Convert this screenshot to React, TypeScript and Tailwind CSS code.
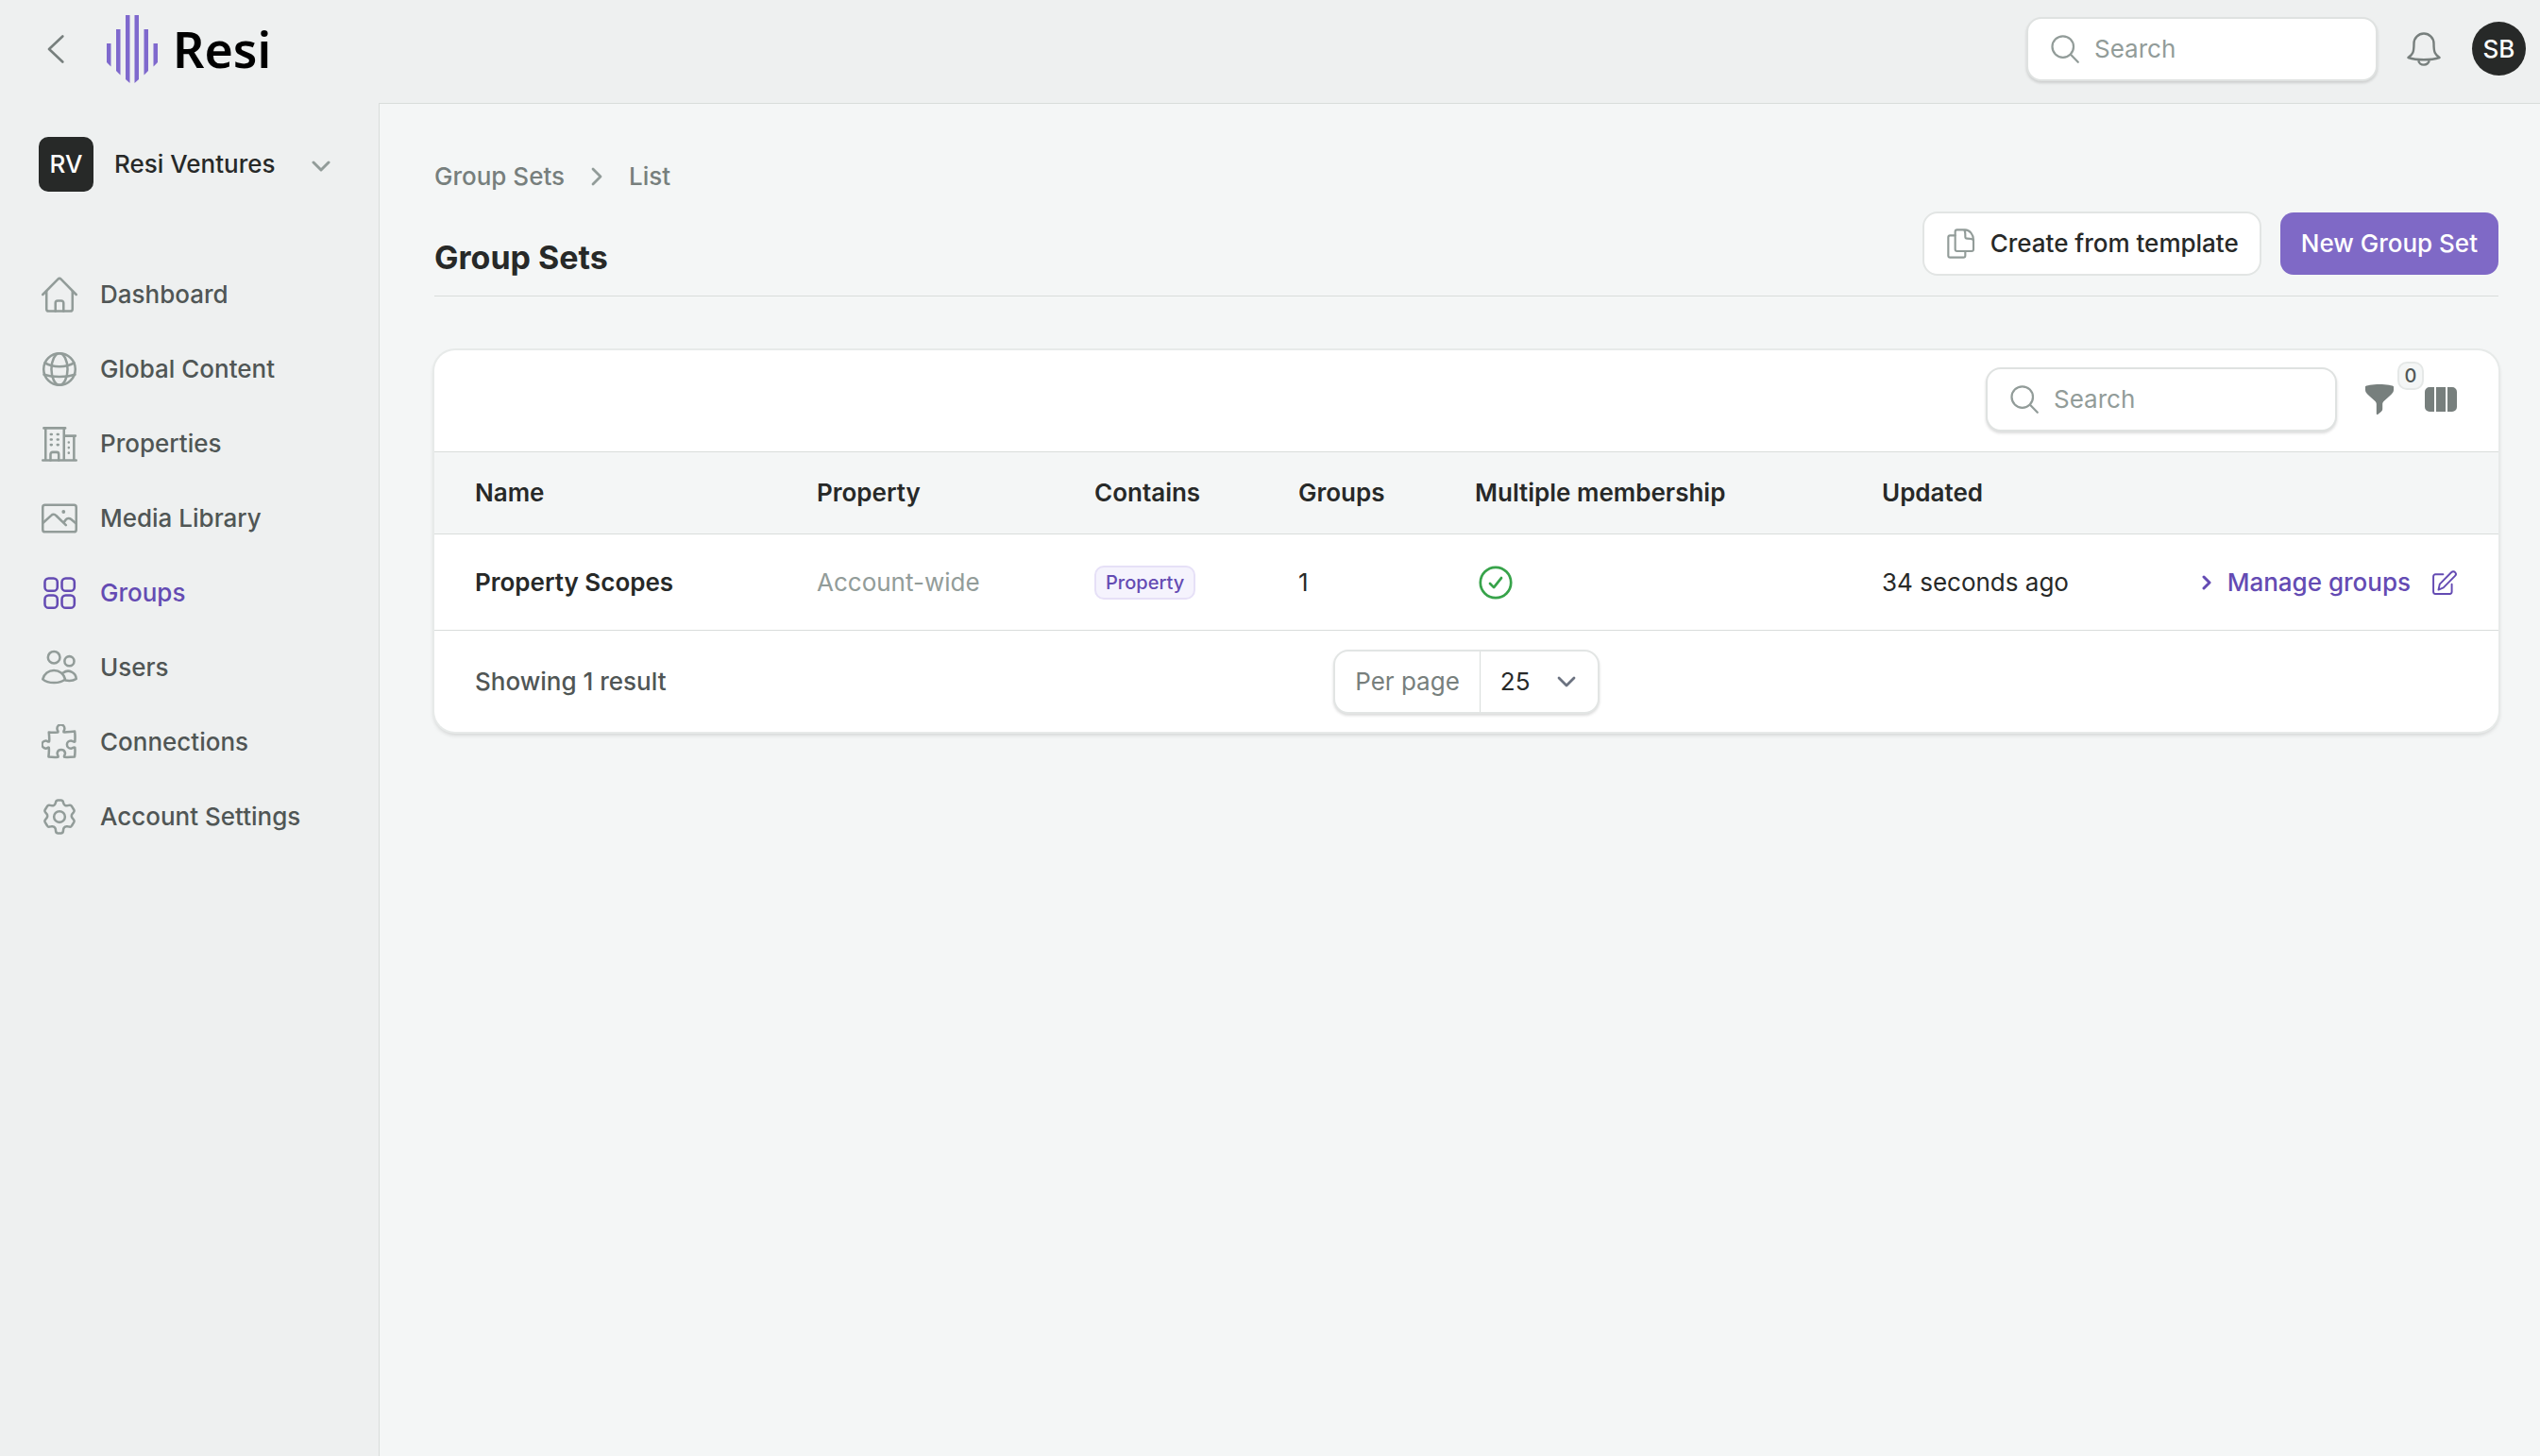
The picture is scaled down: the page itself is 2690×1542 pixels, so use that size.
import React from 'react';

type IconProps = { className?: string };

const Icon: React.FC<IconProps & { children: React.ReactNode; width?: number }> = ({ className, children, width = 1.6 }) => (
  <svg viewBox="0 0 24 24" fill="none" stroke="currentColor" strokeWidth={width} strokeLinecap="round" strokeLinejoin="round" className={className} aria-hidden="true">
    {children}
  </svg>
);

const SearchIcon = ({ className }: IconProps) => (
  <Icon className={className} width={1.8}>
    <circle cx="10.2" cy="10" r="9" />
    <path d="M16.8 16.6l6.2 6.4" />
  </Icon>
);

const navItems = [
  {
    label: 'Dashboard',
    icon: (
      <>
        <path d="M.8 12L11 1.6a1.4 1.4 0 0 1 2 0L23.2 12" />
        <path d="M3.3 9.600v12a1.5 1.5 0 0 0 1.5 1.5h14.4a1.5 1.5 0 0 0 1.5-1.500v-12" />
        <path d="M9.300 23v-5.400a1.500 1.500 0 0 1 1.500-1.500h2.400a1.500 1.500 0 0 1 1.500 1.500V23" />
      </>
    ),
  },
  {
    label: 'Global Content',
    icon: (
      <>
        <circle cx="12" cy="12" r="10.6" />
        <ellipse cx="12" cy="12" rx="5.4" ry="10.6" />
        <path d="M2.200 7.800c5.600 3.200 14 3.200 19.600 0M1.600 15.600c6 2 14.800 2 20.800 0" />
      </>
    ),
  },
  {
    label: 'Properties',
    icon: (
      <>
        <path d="M.8 23h22.400M1.500 1.500h14.400M2.700 1.500V23M15 1.500V23M15 6.700h7.700M21.700 6.700V23" />
        <path d="M6 23v-4a1.400 1.400 0 0 1 1.400-1.400h2.700A1.400 1.400 0 0 1 11.500 19v4" />
        <path d="M6.200 5.700h.6M10.600 5.700h.6M6.200 9.200h.6M10.600 9.200h.6M6.200 12.700h.6M10.600 12.700h.6M18.200 11v.1M18.200 14.500v.1M18.200 18v.1" />
      </>
    ),
  },
  {
    label: 'Media Library',
    icon: (
      <>
        <rect x=".8" y="3" width="22.4" height="18" rx="1.5" />
        <path d="M1 15l5.500-5a2.200 2.200 0 0 1 3.200.1l6.600 6.400M14.700 15l1.500-2.100a2.600 2.600 0 0 1 3.600-.3l3.200 2.700" />
        <path d="M14.700 7.500v.1" strokeWidth="2.4" />
      </>
    ),
  },
  {
    label: 'Groups',
    active: true,
    icon: (
      <>
        <rect x="2.2" y="2.2" width="8.4" height="8.4" rx="2.6" />
        <rect x="13.6" y="2.2" width="8.4" height="8.4" rx="2.6" />
        <rect x="2.2" y="13.6" width="8.4" height="8.4" rx="2.6" />
        <rect x="13.6" y="13.6" width="8.4" height="8.4" rx="2.6" />
      </>
    ),
  },
  {
    label: 'Users',
    icon: (
      <>
        <circle cx="8.3" cy="5.2" r="4" />
        <circle cx="18.6" cy="7.7" r="3.2" />
        <path d="M.8 19.800a7.700 7.700 0 0 1 15 0c-3.500 3.100-11.500 3.100-15 0zM14.500 15.500a5.400 5.400 0 0 1 8.700 4c-1.700 1.200-4.600 1.600-7.200 1.100" />
      </>
    ),
  },
  {
    label: 'Connections',
    icon: (
      <path
        d="M10.900 6.300c.5-.6-.5-1-.5-2.500a2.500 2.500 0 0 1 5 0c0 1.500-1 1.900-.5 2.500.9.300 5.100-.4 7.300-.5.300 2.300.3 4.600.1 6.900-.6.700-1.400-.7-2.700-.7a2.600 2.600 0 0 0 0 5.200c1.300 0 2-1.300 2.700-.6.200 2 .1 4.500-.2 6.200-2.200.2-4.500.4-6.800.2-.7-.6.500-1.200.5-2.700a2.700 2.700 0 0 0-5.300 0c0 1.500 1.100 2.100.5 2.700-2 .2-4.200.1-6.300-.2.100-2 .5-4.200.2-6.200-.6-.5-1 .6-2 .6a2.500 2.500 0 0 1 0-5.100c1 0 1.500 1 2.200.5.300-2 0-4-.2-6.200 2 .2 4 .2 6 0z"
        transform="translate(0 -1)"
      />
    ),
  },
  {
    label: 'Account Settings',
    icon: (
      <>
        <circle cx="12" cy="12" r="3.7" />
        <path d="M9.300 3l.3-1a1.400 1.400 0 0 1 1.400-1.100h2A1.400 1.400 0 0 1 14.400 2l.3 1a2.200 2.200 0 0 0 2.700 1.500l1.200-.2a1.400 1.400 0 0 1 1.600.7l1.500 2.400a1.400 1.400 0 0 1-.2 1.600l-.8.900a2.200 2.200 0 0 0 0 3.100l.8 1a1.400 1.400 0 0 1 .2 1.600L20.200 18a1.400 1.400 0 0 1-1.600.7l-1.200-.2a2.200 2.200 0 0 0-2.700 1.500l-.3 2a1.400 1.400 0 0 1-1.400 1.100h-2A1.400 1.400 0 0 1 9.600 22l-.3-2a2.200 2.200 0 0 0-2.700-1.500l-1.200.2A1.400 1.400 0 0 1 3.800 18l-1.500-2.400a1.400 1.400 0 0 1 .2-1.600l.8-1a2.200 2.200 0 0 0 0-3.100l-.8-.9a1.400 1.400 0 0 1-.2-1.600L3.800 5a1.400 1.400 0 0 1 1.600-.7l1.200.2A2.200 2.200 0 0 0 9.300 3z" />
      </>
    ),
  },
];

const SearchBox: React.FC<{ label: string }> = ({ label }) => (
  <label className="flex h-[68px] w-[372px] items-center gap-4 rounded-[16px] border-2 border-[#dfe2e1] bg-white pl-6 pr-4 shadow-[0_2px_3px_rgba(0,0,0,0.14)]">
    <SearchIcon className="h-[30px] w-[30px] shrink-0 text-[#929c99]" />
    <input type="search" aria-label={label} placeholder="Search" className="w-full min-w-0 bg-transparent outline-none placeholder:text-[#929c99]" />
  </label>
);

const Header = () => (
  <header className="flex h-[109px] items-center justify-between pl-[50px] pr-[15px] pb-[6px]">
    <div className="flex items-center">
      <button type="button" aria-label="Back" className="text-[#777f7d]">
        <svg viewBox="0 0 18 30" className="h-[30px] w-[18px]" fill="none" stroke="currentColor" strokeWidth="2.6" strokeLinecap="round" strokeLinejoin="round">
          <path d="M16.300 1.500L2 15l14.300 13.500" />
        </svg>
      </button>
      <a href="#home" aria-label="Resi" className="ml-[45px] flex items-center gap-4 text-black">
        <svg viewBox="0 0 54 72" className="h-[72px] w-[54px]" fill="#7f69cd" aria-hidden="true">
          <path d="M0 30h4.500v24.500L0 50zM10 15h4.500v48.500L10 59zM20 0h4.500v72L20 68zM29.500 0H34v68l-4.500 4zM39.500 15H44v44l-4.500 4.500zM49.500 30H54v20l-4.500 4.500z" />
        </svg>
        <span className="font-['Noto_Sans',sans-serif] text-[52px] leading-[72px] font-semibold">Resi</span>
      </a>
    </div>
    <div className="flex items-center">
      <SearchBox label="Search everything" />
      <button type="button" aria-label="Notifications" className="ml-[31px] text-[#777f7d]">
        <Icon className="h-9 w-9">
          <path d="M12 1a7 7 0 0 1 7 7c0 7 1 7.500 4 10-6 2-16 2-22 0 3-2.500 4-3 4-10a7 7 0 0 1 7-7zM8.200 19.600c0 4.600 7.600 4.600 7.600 0" />
        </Icon>
      </button>
      <button type="button" aria-label="Account menu" className="ml-[33px] h-[57px] w-[57px] rounded-full bg-[#272928] font-medium text-white">SB</button>
    </div>
  </header>
);

const Sidebar = () => (
  <aside className="w-[401px] shrink-0">
    <button type="button" className="mt-9 ml-[41px] flex items-center">
      <span className="flex h-[58px] w-[58px] items-center justify-center rounded-[10px] bg-[#272928] font-medium text-white">RV</span>
      <span className="ml-[22px] w-[209px] text-left font-medium">Resi Ventures</span>
      <svg viewBox="0 0 20 12" className="mt-1 h-3 w-5" fill="none" stroke="#929c99" strokeWidth="3" strokeLinecap="round" strokeLinejoin="round" aria-hidden="true">
        <path d="M2 2l8 8 8-8" />
      </svg>
    </button>
    <nav className="mt-[69px]">
      <ul>
        {navItems.map((item) => (
          <li key={item.label}>
            <a href="#" className={`flex h-[79px] items-center gap-6 pl-11 font-medium ${item.active ? 'text-[#644bb3]' : 'text-[#505655]'}`}>
              <Icon className={`h-[38px] w-[38px] ${item.active ? '' : 'text-[#929c99]'}`}>{item.icon}</Icon>
              {item.label}
            </a>
          </li>
        ))}
      </ul>
    </nav>
  </aside>
);

const PageHeading = () => (
  <div>
    <nav aria-label="Breadcrumb" className="flex items-center font-medium text-[#777f7d]">
      <a href="#group-sets">Group Sets</a>
      <svg viewBox="0 0 12 20" className="mx-7 h-5 w-3" fill="none" stroke="#929c99" strokeWidth="2.8" strokeLinecap="round" strokeLinejoin="round" aria-hidden="true">
        <path d="M2 2l8 8-8 8" />
      </svg>
      <span>List</span>
    </nav>
    <div className="mt-[19px] flex items-end justify-between border-b border-[#d9dddb] pb-[21px]">
      <h1 className="-mb-1 text-[34px] leading-[46px] font-bold">Group Sets</h1>
      <div className="flex items-center gap-5">
        <button type="button" className="flex h-[68px] items-center gap-4 rounded-[16px] border-2 border-[#e2e5e4] bg-white px-[22px] font-medium">
          <Icon className="h-8 w-8 text-[#929c99]">
            <path d="M9.500 1h6.300C19.500 1 22.500 5 22.500 9v7.500a1.500 1.500 0 0 1-1.500 1.500H9.500A1.500 1.500 0 0 1 8 16.500v-14A1.500 1.500 0 0 1 9.500 1zM14.500 1c1.600.4 1.500 2.500 1.500 5.500 0 1 .5 1.500 1.500 1.500 2.500 0 4.500 0 5 1.500" />
            <path d="M8 5.500H4A1.500 1.500 0 0 0 2.500 7v14.500A1.500 1.500 0 0 0 4 23h10.500a1.500 1.500 0 0 0 1.500-1.500V18" />
          </Icon>
          Create from template
        </button>
        <button type="button" className="h-[66px] rounded-[14px] bg-[#7f69c6] px-[22px] font-medium text-white">New Group Set</button>
      </div>
    </div>
  </div>
);

const GroupSetsTable = () => (
  <table className="w-full table-fixed text-left">
    <colgroup>
      <col className="w-[381px]" />
      <col className="w-[294px]" />
      <col className="w-[216px]" />
      <col className="w-[187px]" />
      <col className="w-[431px]" />
      <col className="w-[280px]" />
      <col />
    </colgroup>
    <thead>
      <tr className="h-[87px] border-y border-[#d9dddb] bg-[#f4f6f6] [&>th]:font-semibold">
        <th className="pl-[43px]">Name</th>
        <th className="pl-6">Property</th>
        <th className="pl-6">Contains</th>
        <th className="pl-6">Groups</th>
        <th className="pl-6">Multiple membership</th>
        <th className="pl-6">Updated</th>
        <th aria-label="Actions" />
      </tr>
    </thead>
    <tbody>
      <tr className="h-[102px] border-b border-[#d9dddb]">
        <td className="pl-[43px] font-semibold">Property Scopes</td>
        <td className="pl-6 text-[#929c99]">Account-wide</td>
        <td className="pl-6">
          <span className="inline-block rounded-[10px] border-2 border-[#e6e0f7] bg-[#f5f3fd] px-[10px] align-middle text-[20px] leading-8 font-medium text-[#644bb3]">Property</span>
        </td>
        <td className="pl-6">1</td>
        <td className="pl-6">
          <svg viewBox="0 0 24 24" role="img" aria-label="Yes" className="ml-1 h-9 w-9" fill="none" stroke="#37a34a" strokeWidth="1.8" strokeLinecap="round" strokeLinejoin="round">
            <circle cx="12" cy="12" r="10.8" />
            <path d="M8 12.700l2.700 2.700L16 8.700" />
          </svg>
        </td>
        <td className="pl-6">34 seconds ago</td>
        <td className="pr-11">
          <div className="flex items-center justify-end text-[#644bb3]">
            <a href="#manage" className="flex items-center gap-4 font-medium">
              <svg viewBox="0 0 12 16" className="h-4 w-3" fill="none" stroke="currentColor" strokeWidth="3" strokeLinecap="round" strokeLinejoin="round" aria-hidden="true">
                <path d="M3 2l6 6-6 6" />
              </svg>
              Manage groups
            </a>
            <button type="button" aria-label="Edit" className="ml-[23px]">
              <Icon className="h-[26px] w-[26px]" width={1.8}>
                <path d="M10.500 4H3a2 2 0 0 0-2 2v15a2 2 0 0 0 2 2h14a2 2 0 0 0 2-2v-7.500" />
                <path d="M6 19l1.200-5.500L18.700 1.900a2.400 2.400 0 0 1 3.500 0 2.500 2.500 0 0 1 0 3.500L10.800 17z" />
              </Icon>
            </button>
          </div>
        </td>
      </tr>
    </tbody>
  </table>
);

const Card = () => (
  <section className="mt-[57px] overflow-hidden rounded-[22px] bg-white shadow-[0_0_0_2px_#e7eae9,0_3px_5px_rgba(0,0,0,0.18)]">
    <div className="flex h-[107px] items-center justify-end pr-11 pb-1">
      <SearchBox label="Search group sets" />
      <button type="button" aria-label="Filter" className="relative ml-[29px] text-[#777f7d]">
        <svg viewBox="0 0 32 32" className="h-8 w-8" fill="currentColor" aria-hidden="true">
          <path d="M1 2.500C1 1.300 9 0 16 0s15 1.300 15 2.500V6c0 2-1 3.200-2.500 4.700l-8 7.300c-.9.900-1.300 1.800-1.300 3v5c0 1.200-.5 2.200-1.400 2.900l-3.400 2.800c-.8.600-1.600.1-1.600-.8V21c0-1.200-.4-2.100-1.300-3l-8-7.300C2 9.200 1 8 1 6z" />
        </svg>
        <span className="absolute -top-6 left-[35px] h-[30px] w-7 rounded-[10px] border-2 border-[#e5e8e7] bg-[#f4f6f6] text-center text-[20px] leading-[26px] font-medium text-[#505655]">0</span>
      </button>
      <button type="button" aria-label="Columns" className="ml-8 text-[#777f7d]">
        <svg viewBox="0 0 34 26" className="h-[26px] w-[34px]" fill="currentColor" aria-hidden="true">
          <path d="M5 0h5v26H5a5 5 0 0 1-5-5V5a5 5 0 0 1 5-5zM12 0h10v26H12zM24 0h5a5 5 0 0 1 5 5v16a5 5 0 0 1-5 5h-5z" />
        </svg>
      </button>
    </div>
    <GroupSetsTable />
    <footer className="grid h-[107px] grid-cols-[1fr_auto_1fr] items-center px-[43px]">
      <p className="font-medium text-[#505655]">Showing 1 result</p>
      <label className="flex h-[68px] items-center rounded-[16px] border-2 border-[#e2e5e4] bg-white shadow-[0_2px_3px_rgba(0,0,0,0.14)]">
        <span className="px-[21px] text-[#777f7d]">Per page</span>
        <span className="relative flex h-full items-center border-l border-[#d9dddb]">
          <select defaultValue="25" className="h-full w-[124px] appearance-none bg-transparent pl-[21px] outline-none">
            <option>10</option>
            <option>25</option>
            <option>50</option>
          </select>
          <svg viewBox="0 0 20 12" className="pointer-events-none absolute right-[23px] h-3 w-5" fill="none" stroke="#6b7280" strokeWidth="2.8" strokeLinecap="round" strokeLinejoin="round" aria-hidden="true">
            <path d="M2 2l8 8 8-8" />
          </svg>
        </span>
      </label>
    </footer>
  </section>
);

const App = () => (
  <div className="flex min-h-screen flex-col bg-[#eef0f0] font-['Inter',sans-serif] text-[26px] leading-9 text-[#272928]">
    <Header />
    <div className="flex grow">
      <Sidebar />
      <main className="min-w-0 grow border-t border-l border-[#d9dddb] bg-[#f4f6f6] pt-[59px] pr-11 pl-[58px]">
        <PageHeading />
        <Card />
      </main>
    </div>
  </div>
);

export default App;
